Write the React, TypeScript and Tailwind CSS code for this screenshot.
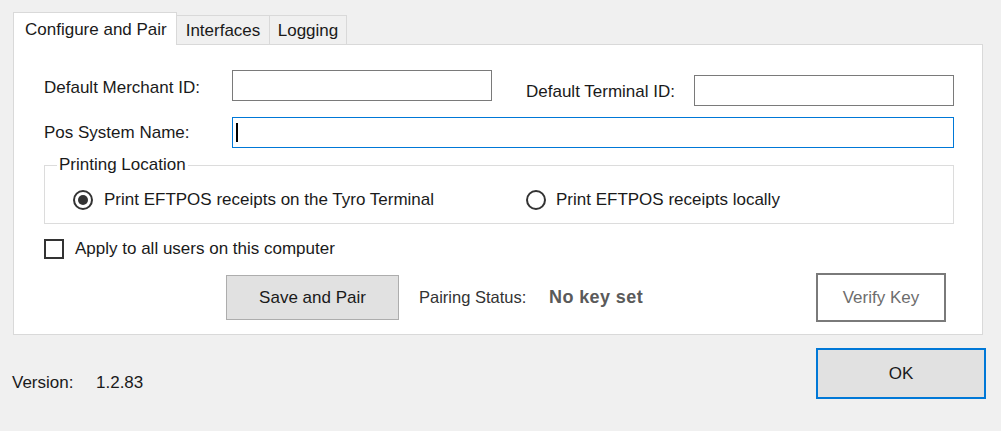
function Radio({ checked }: { checked?: boolean }) {
  return (
    <span className="w-[20px] h-[20px] rounded-full border-2 border-[#333333] bg-white flex items-center justify-center shrink-0">
      {checked && <span className="w-[10px] h-[10px] rounded-full bg-[#333333]" />}
    </span>
  );
}

function App() {
  return (
    <div className="w-[1001px] h-[431px] bg-[#f0f0f0] pt-[12px] font-['Liberation_Sans',Arial,sans-serif] text-[17px] text-[#1a1a1a] overflow-hidden">
      {/* tabs */}
      <div className="flex items-end h-[32px] pl-[13px]">
        <div className="relative z-10 -mb-px w-[164px] h-[33px] bg-white border border-b-0 border-[#d9d9d9] flex items-center pl-[11px] pt-[2px] leading-[20px]">
          Configure and Pair
        </div>
        <div className="w-[93px] h-[29px] bg-[#f0f0f0] border-t border-r border-[#d9d9d9] flex items-center justify-center pt-[2px] leading-[20px]">
          Interfaces
        </div>
        <div className="w-[77px] h-[29px] bg-[#f0f0f0] border-t border-r border-[#d9d9d9] flex items-center justify-center pt-[2px] leading-[20px]">
          Logging
        </div>
      </div>

      {/* panel */}
      <div className="ml-[13px] w-[970px] h-[291px] bg-white border border-[#d9d9d9] pl-[30px] pt-[25px]">
        <div className="flex items-start">
          <div className="w-[188px] pt-[8px] leading-[20px]">Default Merchant ID:</div>
          <div className="w-[260px] h-[31px] border border-[#7a7a7a] bg-white" />
          <div className="flex items-start mt-[5px] ml-[34px]">
            <div className="w-[168px] pt-[7px] leading-[20px]">Default Terminal ID:</div>
            <div className="w-[260px] h-[31px] border border-[#7a7a7a] bg-white" />
          </div>
        </div>

        <div className="flex items-start mt-[11px]">
          <div className="w-[188px] pt-[6px] leading-[20px]">Pos System Name:</div>
          <div className="w-[722px] h-[31px] border border-[#0078d7] bg-white flex items-center pl-[3px]">
            <div className="w-[2px] h-[19px] bg-black" />
          </div>
        </div>

        <fieldset className="mt-[7px] w-[910px] border border-[#dcdcdc] pb-[13px]">
          <legend className="ml-[12px] px-[2px] leading-[20px]">Printing Location</legend>
          <div className="flex items-center pt-[15px] pl-[28px]">
            <div className="w-[453px] flex items-center gap-[11px]">
              <Radio checked />
              <span className="leading-[20px]">Print EFTPOS receipts on the Tyro Terminal</span>
            </div>
            <div className="flex items-center gap-[10px]">
              <Radio />
              <span className="leading-[20px]">Print EFTPOS receipts locally</span>
            </div>
          </div>
        </fieldset>

        <div className="flex items-center gap-[11px] mt-[15px]">
          <span className="w-[20px] h-[20px] border-2 border-[#333333] bg-white" />
          <span className="leading-[20px]">Apply to all users on this computer</span>
        </div>

        <div className="flex items-center mt-[14px] ml-[182px]">
          <button className="w-[173px] h-[45px] bg-[#e1e1e1] border border-[#adadad] text-[#1a1a1a]">
            Save and Pair
          </button>
          <span className="ml-[20px] w-[130px] text-[16.5px] text-[#333333]">Pairing Status:</span>
          <span className="text-[18px] font-bold tracking-[0.4px] text-[#5a5a5a]">No key set</span>
          <button className="ml-auto mr-[36px] w-[130px] h-[49px] bg-white border-2 border-[#7a7a7a] text-[#6d6d6d]">
            Verify Key
          </button>
        </div>
      </div>

      {/* footer */}
      <div className="flex items-start justify-between pl-[12px] pr-[15px]">
        <div className="flex mt-[38px] leading-[20px]">
          <span className="w-[84px]">Version:</span>
          <span>1.2.83</span>
        </div>
        <button className="mt-[13px] w-[170px] h-[51px] bg-[#e1e1e1] border-2 border-[#0078d7] text-[#1a1a1a]">
          OK
        </button>
      </div>
    </div>
  );
}

export default App;
